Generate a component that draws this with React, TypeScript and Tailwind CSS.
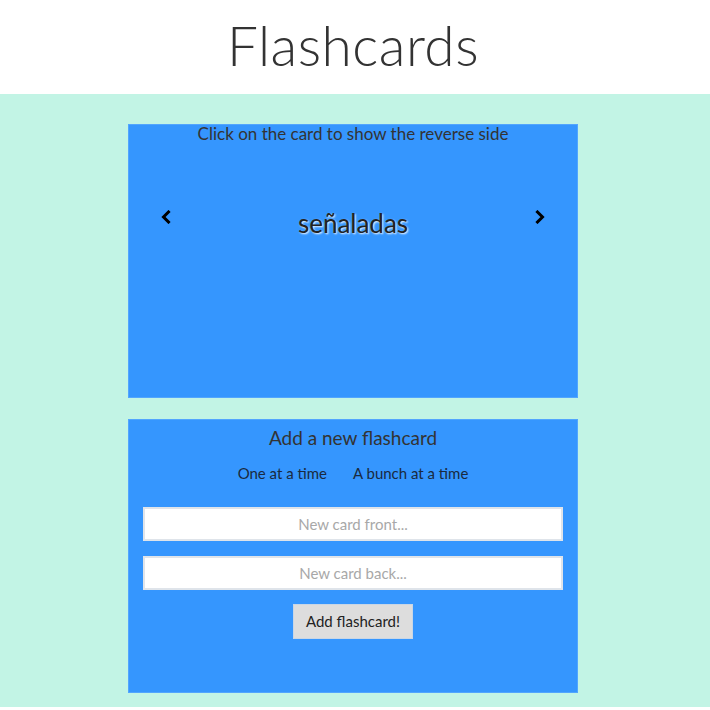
import { useState } from "react";

const font = { fontFamily: "Lato, 'Open Sans', sans-serif" };

function Chevron({ dir }: { dir: "left" | "right" }) {
  return (
    <svg width="12" height="14" viewBox="0 0 12 14" className="shrink-0">
      <path
        d={dir === "left" ? "M8.5 2 L3.5 7 L8.5 12" : "M3.5 2 L8.5 7 L3.5 12"}
        fill="none"
        stroke="#000"
        strokeWidth="3"
        strokeLinecap="square"
      />
    </svg>
  );
}

export default function App() {
  const [front, setFront] = useState("");
  const [back, setBack] = useState("");

  return (
    <div className="min-h-[710px] bg-white" style={font}>
      <header className="h-[94px] flex items-center justify-center pr-[4px]">
        <h1 className="text-[55px] font-light text-[#333] tracking-[0.5px] leading-none pb-1">
          Flashcards
        </h1>
      </header>
      <main className="bg-[#c2f4e5] pt-[30px] pb-[14px] pr-[4px] flex flex-col items-center gap-[21px]">
        <section className="w-[450px] h-[274px] bg-[#3596fe] border border-[#52a5fe] flex flex-col items-center">
          <p className="text-[17px] text-[#333] leading-[18px] mt-0">
            Click on the card to show the reverse side
          </p>
          <div className="w-full flex items-center justify-between px-[31px] mt-[47px]">
            <Chevron dir="left" />
            <span className="text-[26px] text-[#222] mt-[14px] [text-shadow:1px_1px_2px_#fff]">
              señaladas
            </span>
            <Chevron dir="right" />
          </div>
        </section>
        <section className="w-[450px] h-[274px] bg-[#3596fe] border border-[#52a5fe] flex flex-col items-center">
          <h2 className="text-[19px] text-[#333] mt-[6px] leading-6">Add a new flashcard</h2>
          <div className="flex gap-[26px] mt-[12px] text-[15px] text-[#1a2a40]">
            <span>One at a time</span>
            <span>A bunch at a time</span>
          </div>
          <input
            value={front}
            onChange={(e) => setFront(e.target.value)}
            placeholder="New card front..."
            className="w-[420px] h-[34px] mt-[22px] bg-white border-2 border-[#dfe4ea] text-center text-[15px] placeholder:text-[#a8a8a8] outline-none"
          />
          <input
            value={back}
            onChange={(e) => setBack(e.target.value)}
            placeholder="New card back..."
            className="w-[420px] h-[34px] mt-[15px] bg-white border-2 border-[#dfe4ea] text-center text-[15px] placeholder:text-[#a8a8a8] outline-none"
          />
          <button className="mt-[14px] w-[120px] h-[35px] bg-[#dddddd] border border-[#c8d6e6] text-[15px] text-[#222]">
            Add flashcard!
          </button>
        </section>
      </main>
    </div>
  );
}
